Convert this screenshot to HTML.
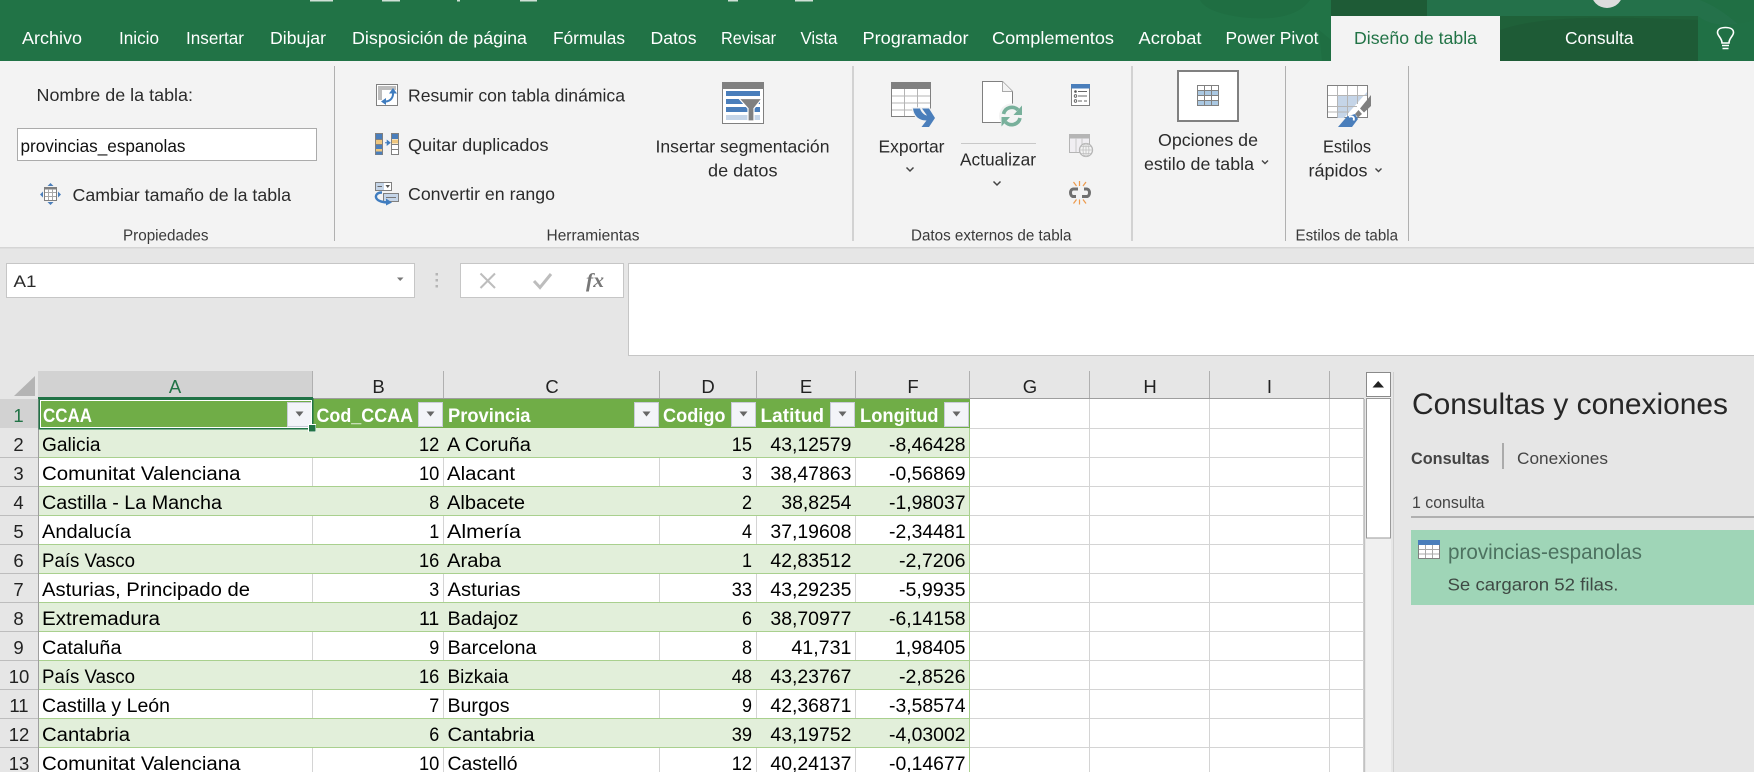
<!DOCTYPE html>
<html lang="es"><head><meta charset="utf-8"><title>Excel</title>
<style>
html,body{margin:0;padding:0;width:1754px;height:772px;overflow:hidden;background:#e6e6e6}
svg{display:block}
text{font-family:"Liberation Sans",sans-serif;white-space:pre}
.t{font-size:17.5px;fill:#fff}
.r{font-size:17.5px;fill:#2b2b2b}
.g{font-size:15.5px;fill:#3a3a3a}
.c{font-size:19px;fill:#000}
.h{font-size:19px;fill:#fff;font-weight:bold}
.n{font-size:18.5px;fill:#222;text-anchor:middle}
.l{font-size:18.5px;fill:#222;text-anchor:middle}
</style></head><body>
<svg xmlns="http://www.w3.org/2000/svg" width="1754" height="772" viewBox="0 0 1754 772">
<!-- title / tab bar -->
<rect width="1754" height="61" fill="#217346"/>
<path d="M1200 0H1310C1300 14 1280 20 1250 18C1225 16 1205 10 1200 0Z" fill="#1f6e42"/>
<path d="M1427 0H1754V61H1698V16H1427Z" fill="#24714a"/>
<path d="M1560 0H1700C1730 12 1740 30 1754 34V0Z" fill="#206f44"/>
<path d="M1698 16C1715 30 1740 24 1754 20V61H1698Z" fill="#207045"/>
<path d="M1319 30L1331 40V61H1322Z" fill="#1f6e42"/>
<rect x="1331" width="96" height="16" fill="#1e5b36"/>
<rect x="1500" y="16" width="198" height="45" fill="#1e5b36"/>
<path d="M1500 30C1540 16 1600 16 1698 20V16H1500Z" fill="#1f6139"/>
<circle cx="1607" cy="-8" r="16" fill="#dcdcdc"/>
<g fill="#cfe0d6"><rect x="310" width="23" height="1.500"/><rect x="382" width="18" height="1.500"/><rect x="520" width="17" height="1.500"/><rect x="457" width="3" height="1.500"/><rect x="728" width="10" height="1.500"/><rect x="795" width="18" height="1.500"/></g>
<rect x="1331" y="16" width="169" height="46" fill="#f3f3f3"/>
<g>
<text class="t" x="22" y="44" textLength="60" lengthAdjust="spacingAndGlyphs">Archivo</text>
<text class="t" x="119" y="44" textLength="40" lengthAdjust="spacingAndGlyphs">Inicio</text>
<text class="t" x="186" y="44" textLength="58" lengthAdjust="spacingAndGlyphs">Insertar</text>
<text class="t" x="270" y="44" textLength="56" lengthAdjust="spacingAndGlyphs">Dibujar</text>
<text class="t" x="352" y="44" textLength="175" lengthAdjust="spacingAndGlyphs">Disposición de página</text>
<text class="t" x="553" y="44" textLength="72" lengthAdjust="spacingAndGlyphs">Fórmulas</text>
<text class="t" x="650.5" y="44" textLength="46" lengthAdjust="spacingAndGlyphs">Datos</text>
<text class="t" x="721" y="44" textLength="55" lengthAdjust="spacingAndGlyphs">Revisar</text>
<text class="t" x="800.5" y="44" textLength="37" lengthAdjust="spacingAndGlyphs">Vista</text>
<text class="t" x="862.5" y="44" textLength="106" lengthAdjust="spacingAndGlyphs">Programador</text>
<text class="t" x="992" y="44" textLength="122" lengthAdjust="spacingAndGlyphs">Complementos</text>
<text class="t" x="1138.5" y="44" textLength="63" lengthAdjust="spacingAndGlyphs">Acrobat</text>
<text class="t" x="1225.5" y="44" textLength="93" lengthAdjust="spacingAndGlyphs">Power Pivot</text>
<text class="t" x="1354" y="44" textLength="123" lengthAdjust="spacingAndGlyphs" style="fill:#217346">Diseño de tabla</text>
<text class="t" x="1565" y="44" textLength="68.5" lengthAdjust="spacingAndGlyphs">Consulta</text>
</g>
<!-- lightbulb -->
<path d="M1722 43C1722 38 1717.5 36 1717.5 32.5C1717.5 29 1721 27.5 1725.5 27.5C1730 27.5 1733.5 29 1733.5 32.5C1733.5 36 1729 38 1729 43Z" fill="none" stroke="#fff" stroke-width="1.6"/>
<path d="M1722 45.5H1729M1722.5 48.5H1728.5" stroke="#fff" stroke-width="1.6"/>
<!-- ribbon -->
<rect y="61" width="1754" height="186" fill="#f3f3f3"/>
<rect y="247" width="1754" height="1.5" fill="#d5d5d5"/>
<g fill="#b0b0b0"><rect x="334" y="66" width="1" height="175"/><rect x="852.5" y="66" width="1" height="175"/><rect x="1131.5" y="66" width="1" height="175"/><rect x="1285" y="66" width="1" height="175"/><rect x="1408" y="66" width="1" height="175"/></g>
<text class="r" x="36.5" y="101" textLength="156.5" lengthAdjust="spacingAndGlyphs">Nombre de la tabla:</text>
<rect x="17.5" y="128.5" width="299" height="32" fill="#fff" stroke="#ababab"/>
<text class="r" x="20.5" y="152" textLength="165" lengthAdjust="spacingAndGlyphs" style="fill:#111">provincias_espanolas</text>
<text class="r" x="72.5" y="201" textLength="218.5" lengthAdjust="spacingAndGlyphs">Cambiar tamaño de la tabla</text>
<text class="g" x="123" y="240.5" textLength="85.5" lengthAdjust="spacingAndGlyphs">Propiedades</text>
<!-- resize icon -->
<g>
<rect x="44.5" y="188.5" width="12" height="12" fill="#fff" stroke="#808080"/>
<rect x="44" y="187" width="13" height="2.5" fill="#808080"/>
<path d="M48.5 189V200M52.5 189V200M45 192.5H56M45 196.5H56" stroke="#a8a8a8"/>
<path d="M50.5 183L47.5 186H53.5ZM50.5 205L47.5 202H53.5ZM40 194.5L43 191.5V197.5ZM61 194.5L58 191.5V197.5Z" fill="#4a7ebb"/>
</g>
<!-- Resumir -->
<text class="r" x="408" y="101.5" textLength="217" lengthAdjust="spacingAndGlyphs">Resumir con tabla dinámica</text>
<rect x="376.5" y="84.5" width="21" height="21" fill="#fff" stroke="#808080"/>
<path d="M378 86H396V90H382V100H378Z" fill="#bdbdbd"/>
<path d="M385 101.500C391 101.500 393.500 97 393 92" fill="none" stroke="#3f7cbf" stroke-width="2"/>
<path d="M393 88L389 93.500H397ZM381 101.500L386 98V105Z" fill="#3f7cbf"/>
<!-- Quitar -->
<text class="r" x="408" y="151" textLength="140.5" lengthAdjust="spacingAndGlyphs">Quitar duplicados</text>
<rect x="375" y="133" width="8" height="22" fill="#808080"/>
<rect x="376" y="134" width="6" height="5" fill="#4a7ebb"/><rect x="376" y="140" width="6" height="4" fill="#eec67e"/><rect x="376" y="145" width="6" height="4" fill="#4a7ebb"/><rect x="376" y="149" width="6" height="2.500" fill="#eec67e"/><rect x="376" y="151.500" width="6" height="3" fill="#4a7ebb"/>
<rect x="391.5" y="133.5" width="7" height="21" fill="#fff" stroke="#808080"/>
<rect x="392" y="134" width="6" height="5" fill="#4a7ebb"/><rect x="392" y="139.500" width="6" height="4" fill="#eec67e"/>
<path d="M392 144.500H398M392 149.500H398" stroke="#808080"/>
<path d="M385 142.700H388M387.200 140.500L390 142.700L387.200 145Z" stroke="#3f7cbf" fill="#3f7cbf"/>
<!-- Convertir -->
<text class="r" x="408" y="200" textLength="147" lengthAdjust="spacingAndGlyphs">Convertir en rango</text>
<rect x="375.500" y="182.500" width="16" height="8" fill="#fff" stroke="#808080"/>
<rect x="376" y="183" width="8" height="7" fill="#c5d5e8"/><path d="M377.500 186.500H382" stroke="#666"/><path d="M385.500 185L390 185L387.700 188Z" fill="#555"/>
<rect x="383.500" y="193.500" width="15" height="8" fill="#c5d5e8" stroke="#808080"/><path d="M386 197.500H396" stroke="#777"/>
<path d="M382 192.500C376.500 192.500 375 196 376.500 198.500C378 201 383 202.500 388 202.500" fill="none" stroke="#3f7cbf" stroke-width="2.400"/>
<path d="M392 202.500L386 198.500V205.500Z" fill="#3f7cbf"/>
<text class="g" x="546.500" y="240.500" textLength="93" lengthAdjust="spacingAndGlyphs">Herramientas</text>
<!-- Segmentation -->
<rect x="722.500" y="82.500" width="41" height="41" fill="#fff" stroke="#808080"/>
<rect x="722" y="82" width="42" height="7" fill="#808080"/>
<rect x="726" y="91" width="34" height="5" fill="#4a7ebb"/><rect x="726" y="99" width="34" height="5" fill="#4a7ebb"/><rect x="726" y="107" width="34" height="5" fill="#4a7ebb"/><rect x="726" y="115" width="34" height="5" fill="#c5d5e8"/>
<path d="M739 98.500H762L754 108.500V121H748V108.500Z" fill="#808080" stroke="#fff" stroke-width="1.200"/>
<text class="r" x="655.500" y="152.500" textLength="174" lengthAdjust="spacingAndGlyphs">Insertar segmentación</text>
<text class="r" x="708" y="176.500" textLength="69.500" lengthAdjust="spacingAndGlyphs">de datos</text>
<!-- Exportar -->
<rect x="891.500" y="82.500" width="39" height="34" fill="#fff" stroke="#808080"/>
<rect x="891" y="82" width="40" height="7" fill="#808080"/>
<path d="M904.500 89V116M917.500 89V116M892 96H930M892 103H930M892 110H930" stroke="#b5b5b5"/>
<path d="M913 108.500H920C921 112 924 115 927 115.500L922 108.500H929L935 118L929 127H921.500L926.500 120.500C918 120.500 914 115 913 108.500Z" fill="#4a7ebb" stroke="#f3f3f3" stroke-width="2.500" paint-order="stroke"/>
<text class="r" x="878.500" y="152.500" textLength="66" lengthAdjust="spacingAndGlyphs">Exportar</text>
<path d="M906.500 167.500L910 171L913.500 167.500" fill="none" stroke="#444" stroke-width="1.500"/>
<!-- Doc refresh -->
<path d="M982.500 81.500H1002.500L1012.500 91.500V122.500H982.500Z" fill="#fff" stroke="#808080"/>
<path d="M1002.500 81.500V91.500H1012.500" fill="#f3f3f3" stroke="#aaa"/>
<circle cx="1011.500" cy="116" r="12.500" fill="#f3f3f3"/>
<path d="M1003.500 114A8.500 8.500 0 0 1 1018 110" fill="none" stroke="#78b09b" stroke-width="3.600"/><path d="M1022 105.500V115H1013.500Z" fill="#78b09b"/>
<path d="M1020 118A8.500 8.500 0 0 1 1005.500 122" fill="none" stroke="#78b09b" stroke-width="3.600"/><path d="M1001.500 126.500V117H1010Z" fill="#78b09b"/>
<rect x="961" y="143" width="75" height="1" fill="#c8c8c8"/>
<text class="r" x="960" y="165.500" textLength="76" lengthAdjust="spacingAndGlyphs">Actualizar</text>
<path d="M993.500 181.500L997 185L1000.500 181.500" fill="none" stroke="#444" stroke-width="1.500"/>
<!-- small list icon -->
<rect x="1071.500" y="84.500" width="18" height="21" fill="#fff" stroke="#808080"/>
<rect x="1071" y="84" width="19" height="4.500" fill="#4a7ebb"/>
<circle cx="1075.500" cy="91.500" r="1.300" fill="#555"/><circle cx="1075.500" cy="96" r="1.300" fill="none" stroke="#555" stroke-width=".8"/><circle cx="1075.500" cy="101" r="1.300" fill="none" stroke="#555" stroke-width=".8"/>
<path d="M1078 91.500H1087M1078 96H1087M1078 101H1082M1084 101H1087" stroke="#666"/>
<!-- globe icon -->
<rect x="1069.500" y="134.500" width="20" height="18" fill="#f0eef2" stroke="#b5b5b5"/>
<rect x="1069" y="134" width="21" height="4.500" fill="#b5b5b5"/>
<path d="M1076 138V152M1082 138V152" stroke="#c8c8c8"/>
<circle cx="1086" cy="150" r="6.500" fill="#f3f3f3" stroke="#b5b5b5" stroke-width="1.300"/>
<path d="M1079.500 150H1092.500M1086 143.500V156.500M1081 146.500H1091M1081 153.500H1091" stroke="#c0c0c0" stroke-width=".8"/>
<ellipse cx="1086" cy="150" rx="3" ry="6.500" fill="none" stroke="#c0c0c0" stroke-width=".8"/>
<!-- break link -->
<path d="M1078 189H1073.500C1069.500 189 1069.500 196.500 1073.500 196.500H1076" fill="none" stroke="#707070" stroke-width="3"/>
<path d="M1082 196.500H1086.500C1090.500 196.500 1090.500 189 1086.500 189H1084" fill="none" stroke="#707070" stroke-width="3"/>
<path d="M1073.500 182L1076.500 186M1079.500 181V186M1086 182L1083 186M1073.500 203.500L1076.500 199.500M1079.500 204.500V199.500M1086 203.500L1083 199.500" stroke="#ed9a4c" stroke-width="1.200"/>
<text class="g" x="911" y="240.500" textLength="160.500" lengthAdjust="spacingAndGlyphs">Datos externos de tabla</text>
<!-- Opciones -->
<rect x="1178" y="71" width="60" height="50" fill="#fff" stroke="#808080" stroke-width="2"/>
<rect x="1197.500" y="85.500" width="21" height="20" fill="#fff" stroke="#808080"/>
<rect x="1198" y="91" width="20" height="5" fill="#aac8e2"/><rect x="1198" y="101" width="20" height="4" fill="#aac8e2"/>
<path d="M1204.500 86V105M1211.500 86V105M1198 90.500H1218M1198 95.500H1218M1198 100.500H1218" stroke="#808080"/>
<text class="r" x="1158" y="146" textLength="100" lengthAdjust="spacingAndGlyphs">Opciones de</text>
<text class="r" x="1144" y="170" textLength="110" lengthAdjust="spacingAndGlyphs">estilo de tabla</text>
<path d="M1262 160.500L1265 163.500L1268 160.500" fill="none" stroke="#444" stroke-width="1.400"/>
<!-- Estilos -->
<rect x="1327.500" y="85.500" width="40" height="32" fill="#fff" stroke="#808080"/>
<path d="M1337.500 95.500H1367V92L1344 118H1337.500Z" fill="#c5d5e8"/>
<path d="M1337.500 86V117M1347.500 86V117M1357.500 86V104M1328 95.500H1367M1328 106.500H1357M1328 112H1349" stroke="#b5b5b5"/>
<path d="M1371 95V106L1364 112.500L1360 108.500Z" fill="#808080"/>
<path d="M1358.500 110L1362 114L1358 117.500L1355 114Z" fill="#808080"/>
<path d="M1338 127L1347 116.500L1355 114L1358 119L1352 127Z" fill="#4a7ebb"/>
<path d="M1349 117C1352 115.500 1355 117 1353.500 120.500" fill="none" stroke="#fff" stroke-width="1.800"/>
<text class="r" x="1323" y="152.500" textLength="48" lengthAdjust="spacingAndGlyphs">Estilos</text>
<text class="r" x="1308.500" y="176.500" textLength="59" lengthAdjust="spacingAndGlyphs">rápidos</text>
<path d="M1375.500 168.500L1378.500 171.500L1381.500 168.500" fill="none" stroke="#444" stroke-width="1.400"/>
<text class="g" x="1295.500" y="240.500" textLength="102.500" lengthAdjust="spacingAndGlyphs">Estilos de tabla</text>
<!-- formula bar -->
<rect x="6.500" y="263.500" width="408" height="34" fill="#fff" stroke="#c6c6c6"/>
<text class="r" x="13.500" y="287" textLength="23" lengthAdjust="spacingAndGlyphs" style="font-size:17px">A1</text>
<path d="M397 277.500H403.500L400.200 281Z" fill="#777"/>
<path d="M435.500 273h2.500v2.500h-2.500zM435.500 279h2.500v2.500h-2.500zM435.500 285h2.500v2.500h-2.500z" fill="#b5b5b5"/>
<rect x="460.500" y="263.500" width="163" height="34" fill="#fff" stroke="#c6c6c6"/>
<path d="M480.500 273.500L495 288M495 273.500L480.500 288" stroke="#bdbdbd" stroke-width="2"/>
<path d="M534 281L540 287.500L551 274" fill="none" stroke="#bdbdbd" stroke-width="3"/>
<text x="586" y="287" textLength="18" lengthAdjust="spacingAndGlyphs" style="font-family:'Liberation Serif',serif;font-style:italic;font-weight:bold;font-size:20px;fill:#777">fx</text>
<rect x="628.500" y="263.500" width="1130" height="92" fill="#fff" stroke="#c6c6c6"/>
<!-- sheet -->
<rect x="0" y="371" width="1364" height="28" fill="#e6e6e6"/>
<rect x="0" y="399" width="38" height="373" fill="#e6e6e6"/>
<rect x="38" y="399" width="1326" height="373" fill="#fff"/>
<rect x="38" y="371" width="274" height="27" fill="#d2d2d2"/>
<rect x="0" y="399" width="38" height="29" fill="#d2d2d2"/>
<path d="M35 376V396H14Z" fill="#b4b4b4"/>
<g fill="#b0b0b0"><rect x="312" y="371" width="1" height="28"/><rect x="443" y="371" width="1" height="28"/><rect x="659" y="371" width="1" height="28"/><rect x="756" y="371" width="1" height="28"/><rect x="855" y="371" width="1" height="28"/><rect x="969" y="371" width="1" height="28"/><rect x="1089" y="371" width="1" height="28"/><rect x="1209" y="371" width="1" height="28"/><rect x="1329" y="371" width="1" height="28"/></g>
<rect x="38" y="398" width="1326" height="1" fill="#9e9e9e"/>
<rect x="38" y="399" width="1" height="373" fill="#9e9e9e"/>
<rect x="1363.500" y="399" width="1" height="373" fill="#9e9e9e"/>
<!-- right grid -->
<g fill="#d4d4d4">
<rect x="970" y="428" width="394" height="1"/><rect x="970" y="457" width="394" height="1"/><rect x="970" y="486" width="394" height="1"/><rect x="970" y="515" width="394" height="1"/><rect x="970" y="544" width="394" height="1"/><rect x="970" y="573" width="394" height="1"/><rect x="970" y="602" width="394" height="1"/><rect x="970" y="631" width="394" height="1"/><rect x="970" y="660" width="394" height="1"/><rect x="970" y="689" width="394" height="1"/><rect x="970" y="718" width="394" height="1"/><rect x="970" y="747" width="394" height="1"/>
<rect x="1089" y="399" width="1" height="373"/><rect x="1209" y="399" width="1" height="373"/><rect x="1329" y="399" width="1" height="373"/>
<!-- white row verticals -->
<rect x="312" y="458" width="1" height="28"/><rect x="443" y="458" width="1" height="28"/><rect x="659" y="458" width="1" height="28"/><rect x="756" y="458" width="1" height="28"/><rect x="855" y="458" width="1" height="28"/>
<rect x="312" y="516" width="1" height="28"/><rect x="443" y="516" width="1" height="28"/><rect x="659" y="516" width="1" height="28"/><rect x="756" y="516" width="1" height="28"/><rect x="855" y="516" width="1" height="28"/>
<rect x="312" y="574" width="1" height="28"/><rect x="443" y="574" width="1" height="28"/><rect x="659" y="574" width="1" height="28"/><rect x="756" y="574" width="1" height="28"/><rect x="855" y="574" width="1" height="28"/>
<rect x="312" y="632" width="1" height="28"/><rect x="443" y="632" width="1" height="28"/><rect x="659" y="632" width="1" height="28"/><rect x="756" y="632" width="1" height="28"/><rect x="855" y="632" width="1" height="28"/>
<rect x="312" y="690" width="1" height="28"/><rect x="443" y="690" width="1" height="28"/><rect x="659" y="690" width="1" height="28"/><rect x="756" y="690" width="1" height="28"/><rect x="855" y="690" width="1" height="28"/>
<rect x="312" y="748" width="1" height="24"/><rect x="443" y="748" width="1" height="24"/><rect x="659" y="748" width="1" height="24"/><rect x="756" y="748" width="1" height="24"/><rect x="855" y="748" width="1" height="24"/>
</g>
<!-- table bands -->
<rect x="39" y="399" width="931" height="29" fill="#70ad47"/>
<g fill="#e2efda">
<rect x="39" y="428" width="930" height="29"/><rect x="39" y="486" width="930" height="29"/><rect x="39" y="544" width="930" height="29"/><rect x="39" y="602" width="930" height="29"/><rect x="39" y="660" width="930" height="29"/><rect x="39" y="718" width="930" height="29"/>
</g>
<g fill="#a9d08e">
<rect x="39" y="457" width="931" height="1"/><rect x="39" y="486" width="931" height="1"/><rect x="39" y="515" width="931" height="1"/><rect x="39" y="544" width="931" height="1"/><rect x="39" y="573" width="931" height="1"/><rect x="39" y="602" width="931" height="1"/><rect x="39" y="631" width="931" height="1"/><rect x="39" y="660" width="931" height="1"/><rect x="39" y="689" width="931" height="1"/><rect x="39" y="718" width="931" height="1"/><rect x="39" y="747" width="931" height="1"/>
<rect x="969" y="428" width="1" height="344"/>
</g>
<rect y="457" width="38" height="1" fill="#bdbdbd"/><rect y="486" width="38" height="1" fill="#bdbdbd"/><rect y="515" width="38" height="1" fill="#bdbdbd"/><rect y="544" width="38" height="1" fill="#bdbdbd"/><rect y="573" width="38" height="1" fill="#bdbdbd"/><rect y="602" width="38" height="1" fill="#bdbdbd"/><rect y="631" width="38" height="1" fill="#bdbdbd"/><rect y="660" width="38" height="1" fill="#bdbdbd"/><rect y="689" width="38" height="1" fill="#bdbdbd"/><rect y="718" width="38" height="1" fill="#bdbdbd"/><rect y="747" width="38" height="1" fill="#bdbdbd"/>
<!-- column letters -->
<text class="l" x="175" y="393" style="fill:#217346">A</text>
<text class="l" x="378.500" y="393">B</text><text class="l" x="552" y="393">C</text><text class="l" x="708" y="393">D</text><text class="l" x="806" y="393">E</text><text class="l" x="913" y="393">F</text><text class="l" x="1030" y="393">G</text><text class="l" x="1150" y="393">H</text><text class="l" x="1269.500" y="393">I</text>
<!-- row numbers -->
<text class="n" x="18.500" y="422" style="fill:#217346">1</text>
<text class="n" x="18.500" y="451">2</text><text class="n" x="18.500" y="480">3</text><text class="n" x="18.500" y="509">4</text><text class="n" x="18.500" y="538">5</text><text class="n" x="18.500" y="567">6</text><text class="n" x="18.500" y="596">7</text><text class="n" x="18.500" y="625">8</text><text class="n" x="18.500" y="654">9</text><text class="n" x="19" y="683">10</text><text class="n" x="19" y="712">11</text><text class="n" x="19" y="741">12</text><text class="n" x="19" y="770">13</text>
<!-- header cells -->
<text class="h" x="43" y="422" textLength="49" lengthAdjust="spacingAndGlyphs">CCAA</text>
<text class="h" x="316.500" y="422" textLength="96.500" lengthAdjust="spacingAndGlyphs">Cod_CCAA</text>
<text class="h" x="448" y="422" textLength="82.500" lengthAdjust="spacingAndGlyphs">Provincia</text>
<text class="h" x="663" y="422" textLength="62.500" lengthAdjust="spacingAndGlyphs">Codigo</text>
<text class="h" x="760.500" y="422" textLength="63.500" lengthAdjust="spacingAndGlyphs">Latitud</text>
<text class="h" x="860" y="422" textLength="78.500" lengthAdjust="spacingAndGlyphs">Longitud</text>
<!-- filter buttons -->
<g fill="#f3f4f8" stroke="#c9ccd8">
<rect x="287.500" y="402.500" width="24" height="24"/><rect x="418.500" y="402.500" width="24" height="24"/><rect x="634.500" y="402.500" width="24" height="24"/><rect x="731.500" y="402.500" width="24" height="24"/><rect x="830.500" y="402.500" width="24" height="24"/><rect x="944.500" y="402.500" width="24" height="24"/>
</g>
<g fill="#666">
<path d="M295.500 411.500h8l-4 5z"/><path d="M426.500 411.500h8l-4 5z"/><path d="M642.500 411.500h8l-4 5z"/><path d="M739.500 411.500h8l-4 5z"/><path d="M838.500 411.500h8l-4 5z"/><path d="M952.500 411.500h8l-4 5z"/>
</g>
<!-- selection -->
<rect x="39.500" y="399" width="273" height="29.500" fill="none" stroke="#217346" stroke-width="2"/>
<rect x="40.500" y="400.500" width="271" height="27" fill="none" stroke="#fff" stroke-width="1"/>
<rect x="38" y="397" width="275" height="2" fill="#217346"/>
<rect x="308" y="424" width="8" height="8" fill="#fff"/>
<rect x="309" y="425" width="6.500" height="6.500" fill="#217346"/>
<!-- cells: row 2 -->
<text class="c" x="42" y="451" textLength="58.500" lengthAdjust="spacingAndGlyphs">Galicia</text>
<text class="c" x="419" y="451" textLength="20.300" lengthAdjust="spacingAndGlyphs">12</text>
<text class="c" x="447" y="451" textLength="84" lengthAdjust="spacingAndGlyphs">A Coruña</text>
<text class="c" x="731.700" y="451" textLength="20.300" lengthAdjust="spacingAndGlyphs">15</text>
<text class="c" x="770.400" y="451" textLength="81" lengthAdjust="spacingAndGlyphs">43,12579</text>
<text class="c" x="889" y="451" textLength="76.500" lengthAdjust="spacingAndGlyphs">-8,46428</text>
<!-- 3 -->
<text class="c" x="42" y="480" textLength="198.500" lengthAdjust="spacingAndGlyphs">Comunitat Valenciana</text>
<text class="c" x="419" y="480" textLength="20.300" lengthAdjust="spacingAndGlyphs">10</text>
<text class="c" x="447" y="480" textLength="68" lengthAdjust="spacingAndGlyphs">Alacant</text>
<text class="c" x="742" y="480" textLength="10" lengthAdjust="spacingAndGlyphs">3</text>
<text class="c" x="770.400" y="480" textLength="81" lengthAdjust="spacingAndGlyphs">38,47863</text>
<text class="c" x="889" y="480" textLength="76.500" lengthAdjust="spacingAndGlyphs">-0,56869</text>
<!-- 4 -->
<text class="c" x="42" y="509" textLength="180" lengthAdjust="spacingAndGlyphs">Castilla - La Mancha</text>
<text class="c" x="429.300" y="509" textLength="10" lengthAdjust="spacingAndGlyphs">8</text>
<text class="c" x="447" y="509" textLength="78" lengthAdjust="spacingAndGlyphs">Albacete</text>
<text class="c" x="742" y="509" textLength="10" lengthAdjust="spacingAndGlyphs">2</text>
<text class="c" x="781.400" y="509" textLength="70" lengthAdjust="spacingAndGlyphs">38,8254</text>
<text class="c" x="889" y="509" textLength="76.500" lengthAdjust="spacingAndGlyphs">-1,98037</text>
<!-- 5 -->
<text class="c" x="42" y="538" textLength="89" lengthAdjust="spacingAndGlyphs">Andalucía</text>
<text class="c" x="429.300" y="538" textLength="10" lengthAdjust="spacingAndGlyphs">1</text>
<text class="c" x="447" y="538" textLength="74" lengthAdjust="spacingAndGlyphs">Almería</text>
<text class="c" x="742" y="538" textLength="10" lengthAdjust="spacingAndGlyphs">4</text>
<text class="c" x="770.400" y="538" textLength="81" lengthAdjust="spacingAndGlyphs">37,19608</text>
<text class="c" x="889" y="538" textLength="76.500" lengthAdjust="spacingAndGlyphs">-2,34481</text>
<!-- 6 -->
<text class="c" x="42" y="567" textLength="93" lengthAdjust="spacingAndGlyphs">País Vasco</text>
<text class="c" x="419" y="567" textLength="20.300" lengthAdjust="spacingAndGlyphs">16</text>
<text class="c" x="447" y="567" textLength="54" lengthAdjust="spacingAndGlyphs">Araba</text>
<text class="c" x="742" y="567" textLength="10" lengthAdjust="spacingAndGlyphs">1</text>
<text class="c" x="770.400" y="567" textLength="81" lengthAdjust="spacingAndGlyphs">42,83512</text>
<text class="c" x="899" y="567" textLength="66.500" lengthAdjust="spacingAndGlyphs">-2,7206</text>
<!-- 7 -->
<text class="c" x="42" y="596" textLength="208" lengthAdjust="spacingAndGlyphs">Asturias, Principado de</text>
<text class="c" x="429.300" y="596" textLength="10" lengthAdjust="spacingAndGlyphs">3</text>
<text class="c" x="447.500" y="596" textLength="73" lengthAdjust="spacingAndGlyphs">Asturias</text>
<text class="c" x="731.700" y="596" textLength="20.300" lengthAdjust="spacingAndGlyphs">33</text>
<text class="c" x="770.400" y="596" textLength="81" lengthAdjust="spacingAndGlyphs">43,29235</text>
<text class="c" x="899" y="596" textLength="66.500" lengthAdjust="spacingAndGlyphs">-5,9935</text>
<!-- 8 -->
<text class="c" x="42" y="625" textLength="118" lengthAdjust="spacingAndGlyphs">Extremadura</text>
<text class="c" x="419" y="625" textLength="20.300" lengthAdjust="spacingAndGlyphs">11</text>
<text class="c" x="447.500" y="625" textLength="71" lengthAdjust="spacingAndGlyphs">Badajoz</text>
<text class="c" x="742" y="625" textLength="10" lengthAdjust="spacingAndGlyphs">6</text>
<text class="c" x="770.400" y="625" textLength="81" lengthAdjust="spacingAndGlyphs">38,70977</text>
<text class="c" x="889" y="625" textLength="76.500" lengthAdjust="spacingAndGlyphs">-6,14158</text>
<!-- 9 -->
<text class="c" x="42" y="654" textLength="79.500" lengthAdjust="spacingAndGlyphs">Cataluña</text>
<text class="c" x="429.300" y="654" textLength="10" lengthAdjust="spacingAndGlyphs">9</text>
<text class="c" x="447.500" y="654" textLength="89" lengthAdjust="spacingAndGlyphs">Barcelona</text>
<text class="c" x="742" y="654" textLength="10" lengthAdjust="spacingAndGlyphs">8</text>
<text class="c" x="791.400" y="654" textLength="60" lengthAdjust="spacingAndGlyphs">41,731</text>
<text class="c" x="895" y="654" textLength="70.500" lengthAdjust="spacingAndGlyphs">1,98405</text>
<!-- 10 -->
<text class="c" x="42" y="683" textLength="93" lengthAdjust="spacingAndGlyphs">País Vasco</text>
<text class="c" x="419" y="683" textLength="20.300" lengthAdjust="spacingAndGlyphs">16</text>
<text class="c" x="447.500" y="683" textLength="61" lengthAdjust="spacingAndGlyphs">Bizkaia</text>
<text class="c" x="731.700" y="683" textLength="20.300" lengthAdjust="spacingAndGlyphs">48</text>
<text class="c" x="770.400" y="683" textLength="81" lengthAdjust="spacingAndGlyphs">43,23767</text>
<text class="c" x="899" y="683" textLength="66.500" lengthAdjust="spacingAndGlyphs">-2,8526</text>
<!-- 11 -->
<text class="c" x="42" y="712" textLength="128" lengthAdjust="spacingAndGlyphs">Castilla y León</text>
<text class="c" x="429.300" y="712" textLength="10" lengthAdjust="spacingAndGlyphs">7</text>
<text class="c" x="447.500" y="712" textLength="62" lengthAdjust="spacingAndGlyphs">Burgos</text>
<text class="c" x="742" y="712" textLength="10" lengthAdjust="spacingAndGlyphs">9</text>
<text class="c" x="770.400" y="712" textLength="81" lengthAdjust="spacingAndGlyphs">42,36871</text>
<text class="c" x="889" y="712" textLength="76.500" lengthAdjust="spacingAndGlyphs">-3,58574</text>
<!-- 12 -->
<text class="c" x="42" y="741" textLength="88" lengthAdjust="spacingAndGlyphs">Cantabria</text>
<text class="c" x="429.300" y="741" textLength="10" lengthAdjust="spacingAndGlyphs">6</text>
<text class="c" x="447.500" y="741" textLength="87" lengthAdjust="spacingAndGlyphs">Cantabria</text>
<text class="c" x="731.700" y="741" textLength="20.300" lengthAdjust="spacingAndGlyphs">39</text>
<text class="c" x="770.400" y="741" textLength="81" lengthAdjust="spacingAndGlyphs">43,19752</text>
<text class="c" x="889" y="741" textLength="76.500" lengthAdjust="spacingAndGlyphs">-4,03002</text>
<!-- 13 -->
<text class="c" x="42" y="770" textLength="198.500" lengthAdjust="spacingAndGlyphs">Comunitat Valenciana</text>
<text class="c" x="419" y="770" textLength="20.300" lengthAdjust="spacingAndGlyphs">10</text>
<text class="c" x="447.500" y="770" textLength="70" lengthAdjust="spacingAndGlyphs">Castelló</text>
<text class="c" x="731.700" y="770" textLength="20.300" lengthAdjust="spacingAndGlyphs">12</text>
<text class="c" x="770.400" y="770" textLength="81" lengthAdjust="spacingAndGlyphs">40,24137</text>
<text class="c" x="889" y="770" textLength="76.500" lengthAdjust="spacingAndGlyphs">-0,14677</text>
<!-- scrollbar -->
<rect x="1366" y="372" width="25" height="400" fill="#f0f0f0"/>
<rect x="1366.500" y="372.500" width="24" height="24" fill="#fff" stroke="#8a8a8a"/>
<path d="M1372.500 387.500H1384L1378.200 381Z" fill="#222"/>
<rect x="1366.500" y="398.500" width="24" height="139.500" fill="#fff" stroke="#9a9a9a"/>
<rect x="1393" y="372" width="1" height="400" fill="#cfcfcf"/>
<!-- panel -->
<text x="1412" y="414" textLength="316" lengthAdjust="spacingAndGlyphs" style="font-size:30px;fill:#262626">Consultas y conexiones</text>
<text x="1411" y="464" textLength="78.500" lengthAdjust="spacingAndGlyphs" style="font-size:17px;font-weight:bold;fill:#444">Consultas</text>
<rect x="1502" y="443" width="2" height="26" fill="#ababab"/>
<text x="1517" y="464" textLength="91" lengthAdjust="spacingAndGlyphs" style="font-size:17px;fill:#444">Conexiones</text>
<text x="1412" y="508" textLength="72.500" lengthAdjust="spacingAndGlyphs" style="font-size:16.500px;fill:#444">1 consulta</text>
<rect x="1411" y="516" width="343" height="2" fill="#b0b0b0"/>
<rect x="1411" y="530" width="343" height="75" fill="#9fd5b7"/>
<rect x="1418.500" y="540.500" width="21" height="18" fill="#fff" stroke="#808080"/>
<rect x="1418" y="540" width="22" height="5" fill="#4a7ebb"/>
<path d="M1425.500 545V558M1432.500 545V558M1419 549.500H1439M1419 554H1439" stroke="#a8a8a8"/>
<text x="1448" y="559" textLength="194" lengthAdjust="spacingAndGlyphs" style="font-size:21px;fill:#4d7260">provincias-espanolas</text>
<text x="1447.500" y="590.500" textLength="171" lengthAdjust="spacingAndGlyphs" style="font-size:17.500px;fill:#3f4a44">Se cargaron 52 filas.</text>
</svg>
</body></html>
